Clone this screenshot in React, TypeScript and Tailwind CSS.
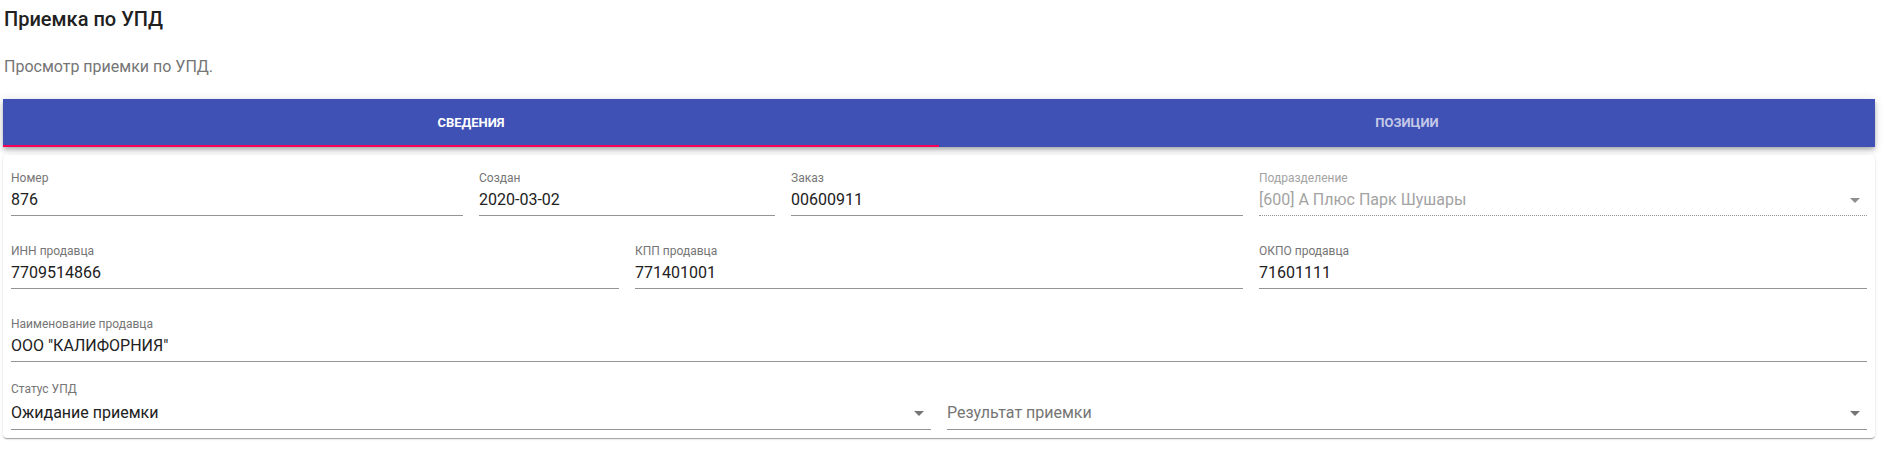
import React from "react";

type Variant = "text" | "select" | "disabled" | "empty";

const spanClass: Record<number, string> = {
  2: "col-span-2",
  3: "col-span-3",
  4: "col-span-4",
  6: "col-span-6",
  12: "col-span-12",
};

function Arrow({ color }: { color: string }) {
  return (
    <svg
      viewBox="0 0 24 24"
      className="absolute right-0 top-1/2 h-[24px] w-[24px] -translate-y-1/2"
      fill={color}
    >
      <path d="M7 10l5 5 5-5z" />
    </svg>
  );
}

function Field({
  label,
  value,
  span,
  variant = "text",
}: {
  label?: string;
  value: string;
  span: number;
  variant?: Variant;
}) {
  const isSelectRow = variant === "select" || variant === "empty";
  const labelColor = variant === "disabled" ? "text-[#a3a3a3]" : "text-[#757575]";
  const valueColor =
    variant === "disabled"
      ? "text-[#a3a3a3]"
      : variant === "empty"
      ? "text-[#757575]"
      : "text-[#212121]";
  const border =
    variant === "disabled"
      ? "border-b border-dotted border-[#949494]"
      : "border-b border-[#949494]";
  return (
    <div className={`${spanClass[span]} px-2`}>
      <div className={`h-[14px] text-[12px] leading-[14px] ${labelColor}`}>{label ?? ""}</div>
      <div
        className={`relative text-[16px] leading-[19px] ${valueColor} ${border} ${
          isSelectRow ? "pt-[7px] pb-[7px]" : "pt-[5px] pb-[6px]"
        }`}
      >
        <span>{value}</span>
        {variant !== "text" && (
          <Arrow color={variant === "disabled" ? "#8f8f8f" : "#757575"} />
        )}
      </div>
    </div>
  );
}

export default function App() {
  return (
    <div className="h-[449px] w-[1887px] overflow-hidden bg-white font-['Roboto',sans-serif]">
      <div className="pl-[3px] pr-[12px]">
        <h1 className="pl-[1px] pt-[7px] text-[20px] font-medium leading-[24px] text-[#212121]">
          Приемка по УПД
        </h1>
        <p className="mt-[26px] pl-[1px] text-[16px] leading-[19px] text-[#757575]">
          Просмотр приемки по УПД.
        </p>

        <div className="mt-[23px] flex h-[48px] bg-[#3f51b5] shadow-[0_2px_4px_-1px_rgba(0,0,0,0.2),0_4px_5px_0_rgba(0,0,0,0.14),0_1px_10px_0_rgba(0,0,0,0.12)]">
          <div className="flex flex-1 items-center justify-center border-b-2 border-[#f50057] pt-[2px] text-[13px] font-bold uppercase text-white">
            Сведения
          </div>
          <div className="flex flex-1 items-center justify-center border-b-2 border-transparent pt-[2px] text-[13px] font-bold uppercase text-white/70">
            Позиции
          </div>
        </div>

        <div className="mt-[8px] rounded-[4px] bg-white pt-[16px] pb-[8px] shadow-[0_2px_1px_-1px_rgba(0,0,0,0.2),0_1px_1px_0_rgba(0,0,0,0.14),0_1px_3px_0_rgba(0,0,0,0.12)]">
          <div className="grid grid-cols-12">
            <Field label="Номер" value="876" span={3} />
            <Field label="Создан" value="2020-03-02" span={2} />
            <Field label="Заказ" value="00600911" span={3} />
            <Field
              label="Подразделение"
              value="[600] А Плюс Парк Шушары"
              span={4}
              variant="disabled"
            />
          </div>
          <div className="mt-[28px] grid grid-cols-12">
            <Field label="ИНН продавца" value="7709514866" span={4} />
            <Field label="КПП продавца" value="771401001" span={4} />
            <Field label="ОКПО продавца" value="71601111" span={4} />
          </div>
          <div className="mt-[28px] grid grid-cols-12">
            <Field label="Наименование продавца" value='ООО "КАЛИФОРНИЯ"' span={12} />
          </div>
          <div className="mt-[20px] grid grid-cols-12">
            <Field label="Статус УПД" value="Ожидание приемки" span={6} variant="select" />
            <Field value="Результат приемки" span={6} variant="empty" />
          </div>
        </div>
      </div>
    </div>
  );
}
